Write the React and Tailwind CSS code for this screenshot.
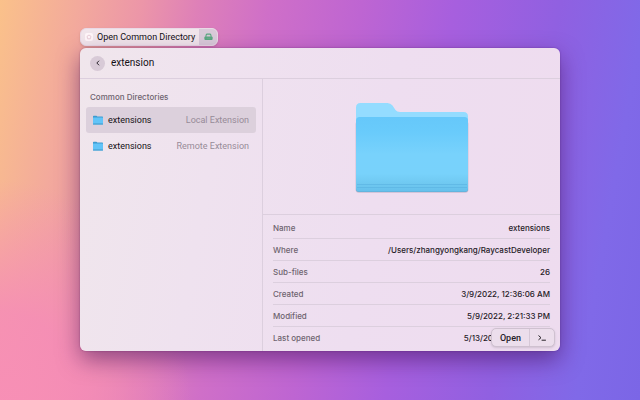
import React, { useState } from 'react';

const directories = [
  { id: 'local', name: 'extensions', source: 'Local Extension' },
  { id: 'remote', name: 'extensions', source: 'Remote Extension' },
];

const metadata = [
  { label: 'Name', value: 'extensions' },
  { label: 'Where', value: '/Users/zhangyongkang/RaycastDeveloper' },
  { label: 'Sub-files', value: '26' },
  { label: 'Created', value: '3/9/2022, 12:36:06 AM' },
  { label: 'Modified', value: '5/9/2022, 2:21:33 PM' },
  { label: 'Last opened', value: '5/13/2022, 2:21:33 PM' },
];

const SmallFolder = () => (
  <svg viewBox="0 0 10 10" className="w-[10px] h-[10px] shrink-0" aria-hidden="true">
    <path d="M0 1.4Q0 0.7 0.7 0.7H3.4L4.3 1.5H9.3Q10 1.5 10 2.2V5H0Z" fill="#3d9bd0" />
    <rect x="0" y="2.5" width="10" height="6.9" rx="0.4" fill="#62c4f8" />
    <rect x="0" y="8.6" width="10" height="0.9" rx="0.3" fill="#3f97c8" />
  </svg>
);

const LargeFolder = () => (
  <svg viewBox="0 -1 116 94" className="w-[116px] h-[94px]" aria-hidden="true">
    <defs>
      <linearGradient id="folder-front" x1="0" y1="0" x2="0" y2="1">
        <stop offset="0" stopColor="#66c8fa" />
        <stop offset="0.2" stopColor="#69cbfb" />
        <stop offset="0.5" stopColor="#78d2fc" />
        <stop offset="0.76" stopColor="#78d2fb" />
        <stop offset="0.9" stopColor="#6fc8f0" />
        <stop offset="1" stopColor="#66c0ec" />
      </linearGradient>
    </defs>
    <rect x="1.6" y="20" width="112.8" height="71.8" rx="3" fill="#8a7f9a" opacity="0.35" />
    <rect x="2" y="20" width="112" height="71" rx="3" fill="#5fa9d0" />
    <path
      d="M2 20V6.5Q2 2 6.5 2H33.5Q36.5 2 38.5 4.5L41.5 9Q43 11 46 11H109.5Q114 11 114 15.5V30H2Z"
      fill="#94dcff"
    />
    <path
      d="M2 19.5Q2 16 5.5 16H110.5Q114 16 114 19.5V87.5Q114 90.5 111 90.5H5Q2 90.5 2 87.5Z"
      fill="url(#folder-front)"
    />
    <path d="M3 83.5H113M3 86.5H113" stroke="#5bb4e3" strokeWidth="0.7" />
  </svg>
);

const CommandTag = () => (
  <div className="flex h-[18px] w-fit items-stretch overflow-hidden rounded-md border border-[#e9d9e6] bg-[#f1e5eb] shadow-sm">
    <div className="flex items-center gap-1 px-1">
      <svg viewBox="0 0 8 8" className="w-2 h-2" aria-hidden="true">
        <rect x="0" y="0" width="8" height="8" rx="2" fill="#fff6f9" />
        <path
          d="M4 2L6 3.4L5.3 5.8H2.7L2 3.4Z"
          fill="none"
          stroke="#e3c3cf"
          strokeWidth="0.8"
        />
      </svg>
      <span className="text-[9px] leading-3 text-[#141015]">Open Common Directory</span>
    </div>
    <div className="flex w-[18px] items-center justify-center bg-[#d9cad9]">
      <svg viewBox="0 0 10 8" className="w-[9px] h-2" aria-hidden="true">
        <path d="M2 3.8L2.5 1.5Q2.7 0.8 3.4 0.8H6.6Q7.3 0.8 7.5 1.5L8 3.8" fill="none" stroke="#5aa881" strokeWidth="1.2" />
        <rect x="0.4" y="3.4" width="9.2" height="4" rx="1.2" fill="#5aa881" />
        <path d="M3 5.4H7" stroke="#7db99a" strokeWidth="0.6" />
      </svg>
    </div>
  </div>
);

const App = () => {
  const [query, setQuery] = useState('extension');
  const [selected, setSelected] = useState('local');

  return (
    <main className="min-h-screen bg-[radial-gradient(ellipse_30%_60%_at_0%_105%,#f88fb6_0%,#f68ab9cc_45%,#f686bd00_100%),linear-gradient(100deg,#fac18a_0%,#f3aa9c_11%,#ec96a8_20%,#de80b8_28%,#cf6fc8_38%,#be65d2_51%,#a75fde_64%,#9060e1_79%,#8069e8_91%,#7b66e6_100%)] px-20 pt-[28px] pb-12 font-[Roboto,sans-serif]">
      <CommandTag />

      <section className="relative mt-[2px] overflow-hidden rounded-md bg-[linear-gradient(100deg,#f0e6ec_0%,#efe2ef_28%,#eedef0_60%,#eedcef_100%)] shadow-[0_9px_22px_rgba(60,10,80,0.5),0_0_2px_rgba(60,10,80,0.4)]">
        <header className="flex h-[31px] items-center gap-[6px] border-b border-[#dccfde] px-[10px]">
          <button
            type="button"
            aria-label="Back"
            className="flex h-[15px] w-[15px] items-center justify-center rounded-full bg-[#d8cad7]"
          >
            <svg viewBox="0 0 6 6" className="w-[6px] h-[6px]" aria-hidden="true">
              <path d="M3.8 1L1.8 3L3.8 5" fill="none" stroke="#2c262e" strokeWidth="1" strokeLinecap="round" strokeLinejoin="round" />
            </svg>
          </button>
          <input
            type="text"
            aria-label="Search directories"
            value={query}
            onChange={(e) => setQuery(e.target.value)}
            className="min-w-0 flex-1 bg-transparent text-[10px] leading-3 text-[#141015] outline-none"
          />
        </header>

        <div className="flex">
          {/* Directory list */}
          <div className="w-[183px] shrink-0 border-r border-[#dccfde] px-[6px] pt-3">
            <h2 className="px-1 font-[Inter,sans-serif] text-[8px] leading-3 font-medium text-[#6d636e]">Common Directories</h2>
            <ul className="mt-1">
              {directories.map((dir) => (
                <li key={dir.id}>
                  <button
                    type="button"
                    onClick={() => setSelected(dir.id)}
                    className={`flex h-[26px] w-full items-center gap-[5px] rounded-[3px] px-[7px] text-[9px] leading-3 ${
                      selected === dir.id ? 'bg-[#dcd0dc]' : ''
                    }`}
                  >
                    <SmallFolder />
                    <span className="text-[#141015]">{dir.name}</span>
                    <span className="ml-auto text-[#978b98]">{dir.source}</span>
                  </button>
                </li>
              ))}
            </ul>
          </div>

          {/* Preview and metadata */}
          <div className="min-w-0 flex-1">
            <div className="flex h-[136px] items-center justify-center border-b border-[#dccfde]">
              <LargeFolder />
            </div>
            <dl className="px-[10px] pt-[2px] pb-[2px] font-[Inter,sans-serif] text-[8px] leading-3 font-medium">
              {metadata.map((item) => (
                <div
                  key={item.label}
                  className="flex h-[22px] items-center justify-between border-b border-[#dccfde] last:border-b-0"
                >
                  <dt className="text-[#6d636e]">{item.label}</dt>
                  <dd className="text-[#262027]">{item.value}</dd>
                </div>
              ))}
            </dl>
          </div>
        </div>

        <div className="absolute right-[5px] bottom-1 flex h-[19px] items-stretch overflow-hidden rounded-[5px] border border-[#cfc1d0] bg-[#ecdeec] shadow-sm">
          <button type="button" className="border-r border-[#d6c8d7] px-2 text-[9px] leading-3 font-medium text-[#262027]">
            Open
          </button>
          <button type="button" aria-label="Actions" className="flex w-6 items-center justify-center">
            <svg viewBox="0 0 8 6" className="w-2 h-[6px]" aria-hidden="true">
              <path d="M0.8 0.8L3 2.7L0.8 4.6M4 5.2H7.5" fill="none" stroke="#262027" strokeWidth="1" strokeLinecap="round" strokeLinejoin="round" />
            </svg>
          </button>
        </div>
      </section>
    </main>
  );
};

export default App;
